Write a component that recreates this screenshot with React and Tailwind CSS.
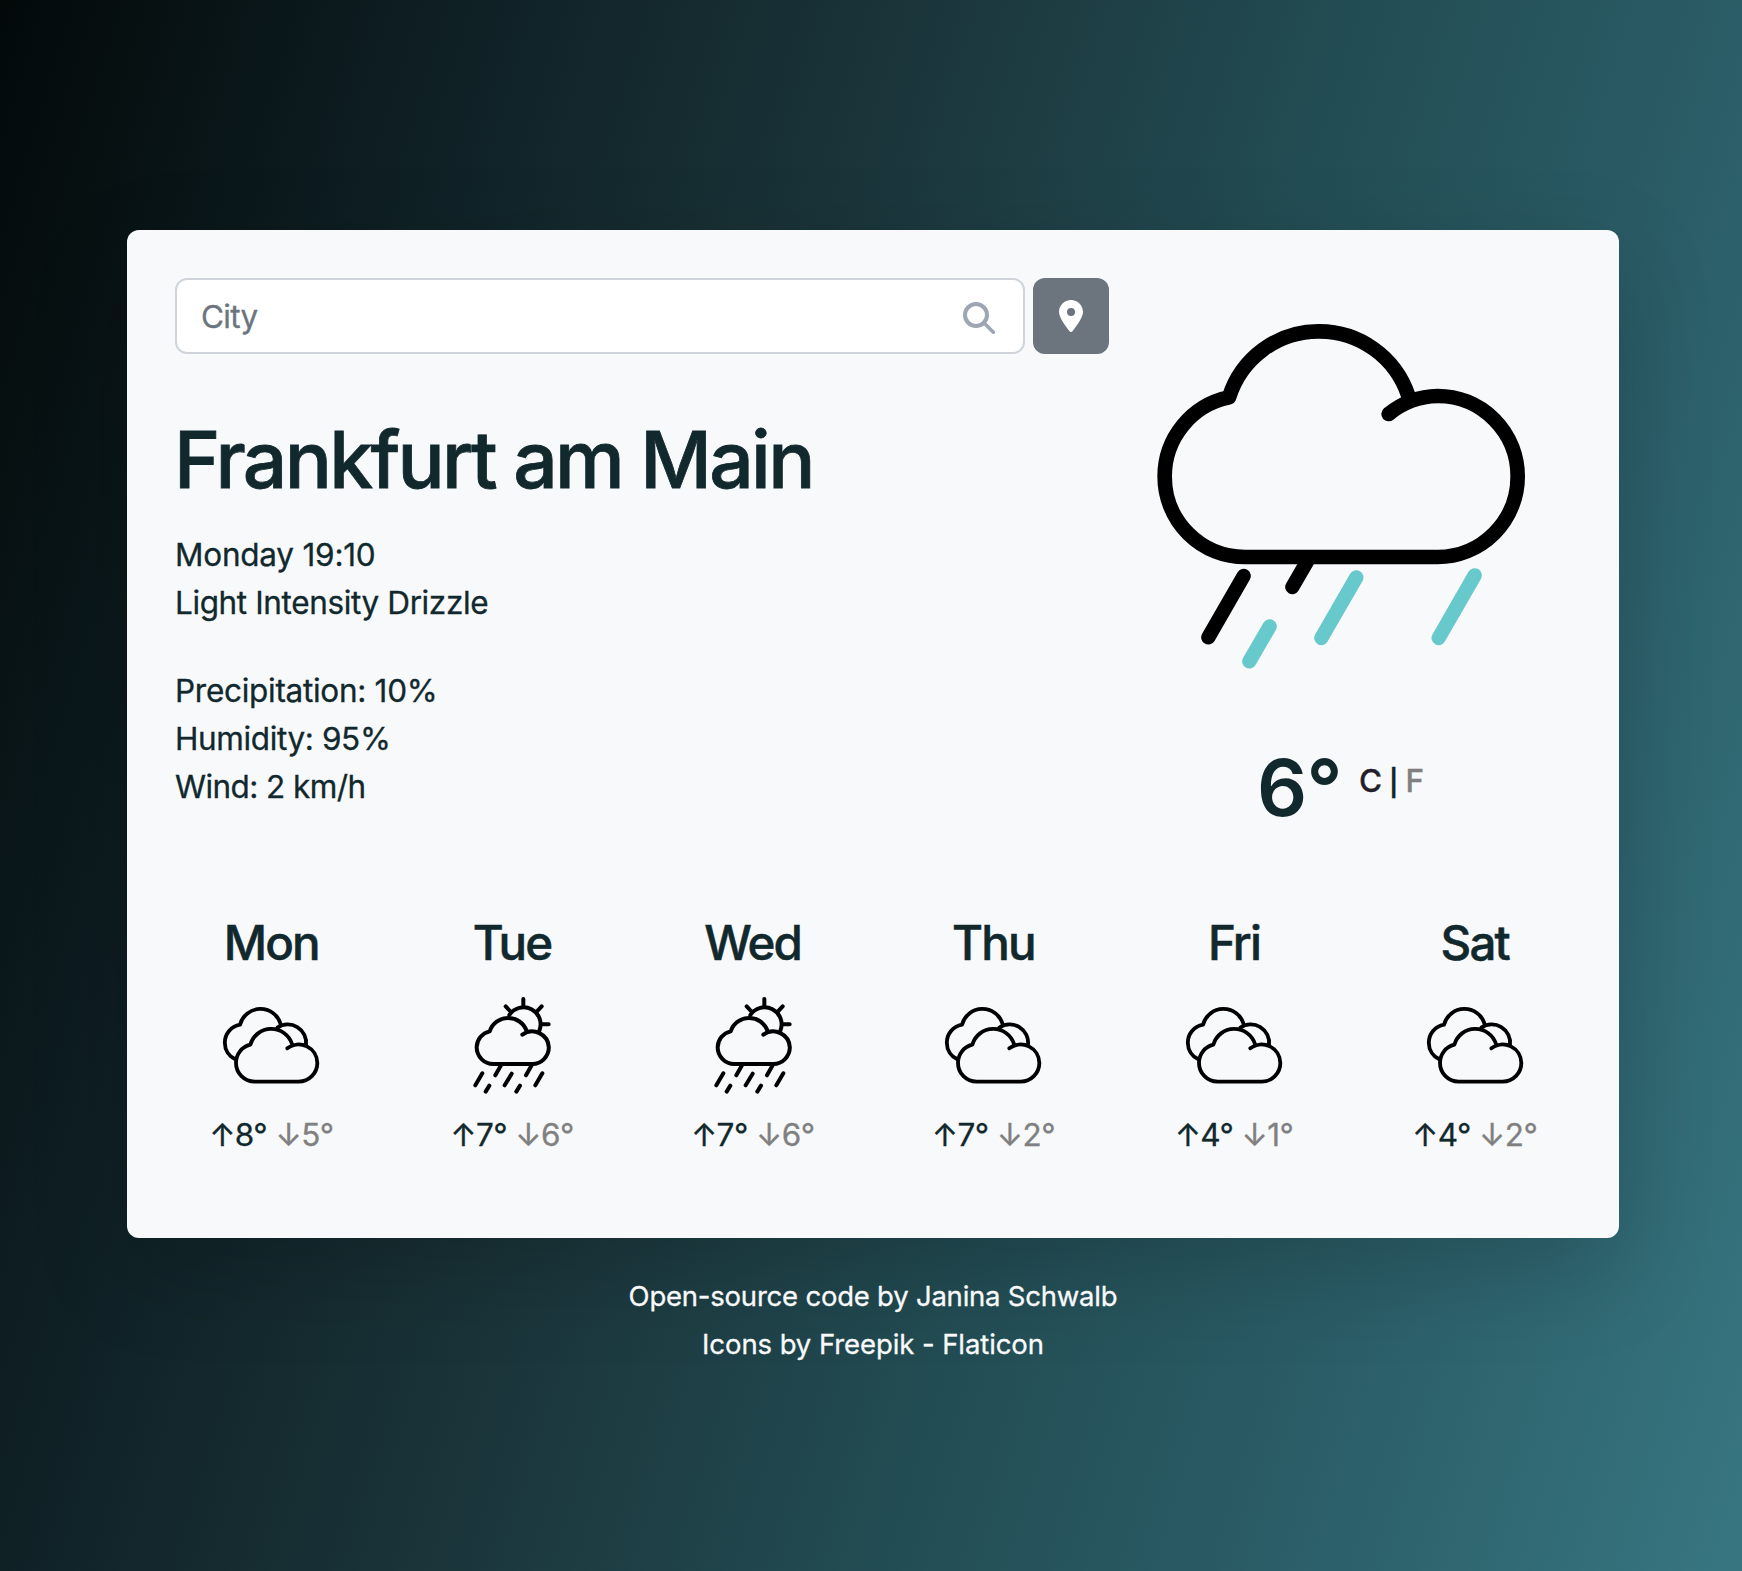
const days = [
  { name: "Mon", icon: "clouds", high: 8, low: 5 },
  { name: "Tue", icon: "rain", high: 7, low: 6 },
  { name: "Wed", icon: "rain", high: 7, low: 6 },
  { name: "Thu", icon: "clouds", high: 7, low: 2 },
  { name: "Fri", icon: "clouds", high: 4, low: 1 },
  { name: "Sat", icon: "clouds", high: 4, low: 2 },
];

function SearchIcon() {
  return (
    <svg className="mt-1 size-8 text-[#9ea5b3]" viewBox="0 0 96 96" fill="none" stroke="currentColor">
      <circle cx="39" cy="39" r="33" strokeWidth="12" />
      <path d="M64 64 L91 91" strokeWidth="10.5" strokeLinecap="round" />
    </svg>
  );
}

function PinIcon() {
  return (
    <svg className="h-8 w-6 text-white" viewBox="0 0 384 512" fill="currentColor">
      <path
        fillRule="evenodd"
        d="M215.7 499.2C267 435 384 279.4 384 192C384 86 298 0 192 0S0 86 0 192c0 87.4 117 243 168.3 307.2c12.3 15.3 35.1 15.3 47.4 0zM192 128a64 64 0 1 1 0 128 64 64 0 1 1 0-128z"
      />
    </svg>
  );
}

function DrizzleIcon() {
  return (
    <svg className="h-[370px] w-[400px]" viewBox="0 0 1200 1110" fill="none" strokeWidth="44" strokeLinecap="round" strokeLinejoin="round">
      <path
        stroke="#000"
        d="M746 312 A240 240 0 0 1 893 258 A240 241 0 0 1 1133 500 A241 241 0 0 1 893 741 H315 A241 241 0 0 1 74 500 A242 242 0 0 1 267 262 A282 282 0 0 1 535 64 A282 282 0 0 1 805 257"
      />
      <path stroke="#000" d="M311 798 L205 982 M505 748 L457 831" strokeWidth="43" />
      <path stroke="#68c9cd" d="M389 949 L328 1054 M649 802 L544 984 M1004 796 L896 984" strokeWidth="43" />
    </svg>
  );
}

function CloudsIcon() {
  return (
    <svg className="size-24 overflow-visible" viewBox="0 0 288 288" fill="none" stroke="#000" strokeWidth="11.5" strokeLinecap="round" strokeLinejoin="round">
      <path d="M193 154 A56 56 0 0 1 283 198 A56 56 0 0 1 227 254 H95 A56 56 0 0 1 39 198 A56 56 0 0 1 82 143 A65.3 65.3 0 0 1 207 141" />
      <path d="M37 187 A55 55 0 0 1 5.5 138 A55 55 0 0 1 51 83 A63.4 63.4 0 0 1 173 81" />
      <path d="M163 92 A55 55 0 0 1 249 144" />
    </svg>
  );
}

function SunRainIcon() {
  return (
    <svg className="size-24 overflow-visible" viewBox="0 0 288 288" fill="none" stroke="#000" strokeWidth="12" strokeLinecap="round" strokeLinejoin="round">
      <path d="M175 113 A50 50 0 0 1 254.5 151 A50 50 0 0 1 205 201 H88 A50 50 0 0 1 38 151 A50 50 0 0 1 77 103 A58.7 58.7 0 0 1 188 102" />
      <path d="M136 54 A51 51 0 0 1 226 101" />
      <path d="M178 6 V28 M125 28 L141 45 M233 28 L219 43 M254 82 H232" />
      <path d="M55 229 L34 265 M111 205 L94 235 M76 266 L65 284 M143 230 L122 265 M203 205 L186 235 M168 266 L157 284 M235 229 L214 265" />
    </svg>
  );
}

function Day({ day }) {
  return (
    <div className="flex flex-col items-center">
      <h2 className="-mt-px h-[59px] text-[47.5px] leading-[58px] font-medium tracking-[-0.04em] [-webkit-text-stroke:0.5px_currentColor]">
        {day.name}
      </h2>
      <div className="mt-6">{day.icon === "clouds" ? <CloudsIcon /> : <SunRainIcon />}</div>
      <p className="mt-[18px] text-[31.5px] leading-12 tracking-[-0.018em] whitespace-nowrap [-webkit-text-stroke:0.3px_currentColor]">
        ↑{day.high}° <span className="text-[#808080]">↓{day.low}°</span>
      </p>
    </div>
  );
}

export default function App() {
  return (
    <div className="h-[1571px] w-[1742px] overflow-hidden bg-[linear-gradient(107deg,#030909_0%,#102227_23%,#1a3439_40.5%,#224b52_60%,#2b5e68_79.5%,#377681_100%)] pt-[230px] pl-[127px] font-['Inter',sans-serif] text-[#11282d]">
      <main className="h-[1008px] w-[1492px] rounded-xl bg-[#f8f9fb] px-12 pt-12 shadow-[0_32px_96px_rgba(0,0,0,0.175)]">
        <div className="flex h-[590px]">
          <section className="w-[934px]">
            <form className="flex gap-2">
              <div className="flex h-[76px] w-[850px] items-center justify-between rounded-xl border-2 border-[#ced4da] bg-white pr-7 pl-6">
                <span className="pt-0.5 text-[31.5px] leading-12 tracking-[-0.022em] text-[#6c757d] [-webkit-text-stroke:0.3px_currentColor]">
                  City
                </span>
                <SearchIcon />
              </div>
              <button type="button" className="flex size-[76px] items-center justify-center rounded-xl bg-[#6c757d]">
                <PinIcon />
              </button>
            </form>
            <h1 className="-ml-px mt-[58px] text-[78.5px] leading-[96px] font-medium tracking-[-0.0345em] whitespace-nowrap [-webkit-text-stroke:0.8px_currentColor]">
              Frankfurt am Main
            </h1>
            <ul className="mt-[23px] text-[31.5px] leading-12 tracking-[-0.012em] [-webkit-text-stroke:0.3px_currentColor]">
              <li className="tracking-[-0.007em]">Monday 19:10</li>
              <li>Light Intensity Drizzle</li>
            </ul>
            <ul className="mt-10 text-[31.5px] leading-12 tracking-[-0.009em] [-webkit-text-stroke:0.3px_currentColor]">
              <li>Precipitation: 10%</li>
              <li className="tracking-[-0.012em]">Humidity: 95%</li>
              <li className="tracking-[-0.018em]">Wind: 2 km/h</li>
            </ul>
          </section>
          <section className="w-[462px] pt-8">
            <div className="pl-[31px]">
              <DrizzleIcon />
            </div>
            <div className="mt-[60px] flex pl-[148px]">
              <strong className="w-[84px] text-[78.5px] leading-[96px] font-semibold tracking-[-0.01em]">6°</strong>
              <span className="mt-[17px] ml-[18px] flex items-baseline text-[31.5px] leading-12 font-medium [-webkit-text-stroke:0.3px_currentColor]">
                <span className="text-[#231f2a]">C</span>
                <span className="ml-[7px] text-[26px] font-semibold">|</span>
                <span className="ml-[7px] text-[#808080]">F</span>
              </span>
            </div>
          </section>
        </div>
        <section className="-mx-6 mt-[47px] grid grid-cols-6">
          {days.map((day) => (
            <Day key={day.name} day={day} />
          ))}
        </section>
      </main>
      <footer className="mt-[34px] w-[1492px] text-center text-[27.5px] leading-12 tracking-[-0.008em] text-[#f8f9fa] [-webkit-text-stroke:0.3px_currentColor]">
        <p>Open-source code by Janina Schwalb</p>
        <p className="tracking-[-0.003em]">Icons by Freepik - Flaticon</p>
      </footer>
    </div>
  );
}
